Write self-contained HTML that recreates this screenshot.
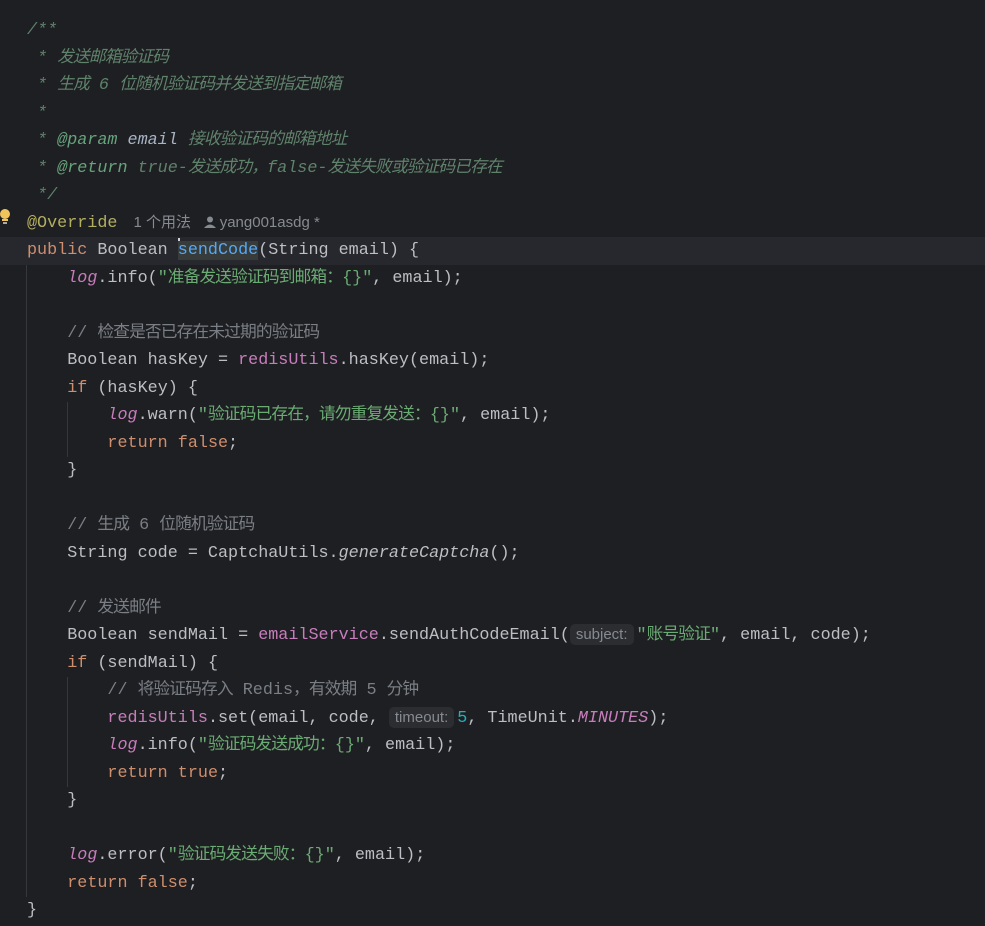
<!DOCTYPE html>
<html><head><meta charset="utf-8"><style>
html,body{margin:0;padding:0;background:#1e1f22;width:985px;height:926px;overflow:hidden}
.ed{position:absolute;left:0;top:17px;width:985px;font-family:"Liberation Mono","Noto Sans CJK SC",monospace;font-size:16.75px;color:#bcbec4}
.l{height:27.5px;line-height:27.5px;white-space:pre;padding-left:27px;position:relative;overflow:hidden}
.cur{background:#26282e}
.c{letter-spacing:-0.9px;font-family:"Noto Sans CJK SC",sans-serif;line-height:1}
.k{color:#cf8e6d}.s{color:#6aab73}.cm{color:#7a7e85}.d{color:#5f826b;font-style:italic}
.dt{color:#67a37c;font-style:italic}.dv{color:#a8b3c4;font-style:italic}
.a{color:#b3ae60}.fn{color:#56a8f5}.f{color:#c77dbb}.fi{color:#c77dbb;font-style:italic}.n{color:#2aacb8}.i{font-style:italic}
.h{font-family:"Liberation Sans","Noto Sans CJK SC",sans-serif;font-size:15px;color:#868a91;line-height:1;margin-left:6px}
.ph{font-family:"Liberation Sans",sans-serif;font-size:15px;color:#868a91;background:#2b2d30;border-radius:5px;padding:2px 6px;margin-right:3px;line-height:1}
.g{position:absolute;width:1px;background:#35373c}
.sel{background:#373b39;color:#56a8f5}
.caret{display:inline-block;width:2px;height:20px;background:#ced0d6;vertical-align:-4px;margin-right:-2px}
</style></head><body>
<div class="g" style="left:26px;top:264px;height:633px"></div>
<div class="g" style="left:67px;top:402px;height:55px"></div>
<div class="g" style="left:67px;top:677px;height:110px"></div>
<svg style="position:absolute;left:0;top:208px" width="12" height="18"><circle cx="5" cy="6" r="5" fill="#f2c55c"/><rect x="2" y="11" width="6" height="2" fill="#f2c55c"/><rect x="3" y="14" width="4" height="2" fill="#aaa"/></svg>
<div class="ed">
<div class="l d">/**</div>
<div class="l d"> * <span class="c">发送邮箱验证码</span></div>
<div class="l d"> * <span class="c">生成</span> 6 <span class="c">位随机验证码并发送到指定邮箱</span></div>
<div class="l d"> *</div>
<div class="l d"> * <span class="dt">@param</span> <span class="dv">email</span> <span class="c">接收验证码的邮箱地址</span></div>
<div class="l d"> * <span class="dt">@return</span> true-<span class="c">发送成功，</span>false-<span class="c">发送失败或验证码已存在</span></div>
<div class="l d"> */</div>
<div class="l"><span class="a">@Override</span> <span class="h">1 个用法 &nbsp; <svg width="12" height="12" style="vertical-align:-1px"><circle cx="6" cy="3.5" r="3" fill="#868a91"/><path d="M0 12 Q6 5 12 12Z" fill="#868a91"/></svg> yang001asdg *</span></div>
<div class="l cur"><span class="k">public</span> Boolean <span class="caret"></span><span class="sel">sendCode</span>(String email) {</div>
<div class="l">    <span class="fi">log</span>.info(<span class="s">"<span class="c">准备发送验证码到邮箱：</span>{}"</span>, email);</div>
<div class="l"> </div>
<div class="l">    <span class="cm">// <span class="c">检查是否已存在未过期的验证码</span></span></div>
<div class="l">    Boolean hasKey = <span class="f">redisUtils</span>.hasKey(email);</div>
<div class="l">    <span class="k">if</span> (hasKey) {</div>
<div class="l">        <span class="fi">log</span>.warn(<span class="s">"<span class="c">验证码已存在，请勿重复发送：</span>{}"</span>, email);</div>
<div class="l">        <span class="k">return false</span>;</div>
<div class="l">    }</div>
<div class="l"> </div>
<div class="l">    <span class="cm">// <span class="c">生成</span> 6 <span class="c">位随机验证码</span></span></div>
<div class="l">    String code = CaptchaUtils.<span class="i">generateCaptcha</span>();</div>
<div class="l"> </div>
<div class="l">    <span class="cm">// <span class="c">发送邮件</span></span></div>
<div class="l">    Boolean sendMail = <span class="f">emailService</span>.sendAuthCodeEmail(<span class="ph">subject:</span><span class="s">"<span class="c">账号验证</span>"</span>, email, code);</div>
<div class="l">    <span class="k">if</span> (sendMail) {</div>
<div class="l">        <span class="cm">// <span class="c">将验证码存入</span> Redis<span class="c">，有效期</span> 5 <span class="c">分钟</span></span></div>
<div class="l">        <span class="f">redisUtils</span>.set(email, code, <span class="ph">timeout:</span><span class="n">5</span>, TimeUnit.<span class="fi">MINUTES</span>);</div>
<div class="l">        <span class="fi">log</span>.info(<span class="s">"<span class="c">验证码发送成功：</span>{}"</span>, email);</div>
<div class="l">        <span class="k">return true</span>;</div>
<div class="l">    }</div>
<div class="l"> </div>
<div class="l">    <span class="fi">log</span>.error(<span class="s">"<span class="c">验证码发送失败：</span>{}"</span>, email);</div>
<div class="l">    <span class="k">return false</span>;</div>
<div class="l">}</div>
</div>
</body></html>
